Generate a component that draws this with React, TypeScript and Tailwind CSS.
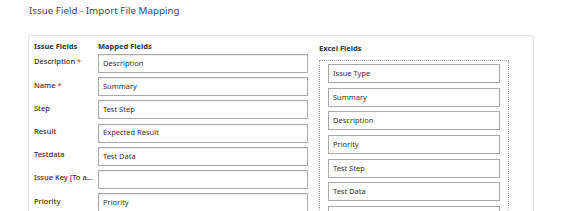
import React from "react";

const rows: { label: string; req?: boolean; value: string }[] = [
  { label: "Description", req: true, value: "Description" },
  { label: "Name", req: true, value: "Summary" },
  { label: "Step", value: "Test Step" },
  { label: "Result", value: "Expected Result" },
  { label: "Testdata", value: "Test Data" },
  { label: "Issue Key [To a...", value: "" },
  { label: "Priority", value: "Priority" },
];

const excel = ["Issue Type", "Summary", "Description", "Priority", "Test Step", "Test Data", ""];

export default function App() {
  return (
    <div className="w-[576px] h-[211px] overflow-hidden bg-white text-[#333] [font-family:'Noto_Sans','Open_Sans',sans-serif]">
      <div className="pl-[29px] pt-[4px] h-[35px]">
        <div className="text-[9.8px] leading-[14px] text-[#3f4756]">Issue Field - Import File Mapping</div>
      </div>
      <div className="ml-[28px] w-[506px] h-[200px] border border-[#e2e2e2] rounded-[2px] flex">
        <div className="pl-[5px] pt-[5px] w-[280px] flex flex-col">
          <div className="flex h-[11px] items-center text-[7.5px] font-bold text-[#2b3441]">
            <div className="w-[64px]">Issue Fields</div>
            <div>Mapped Fields</div>
          </div>
          <div className="mt-[2px] flex flex-col gap-[4.2px]">
            {rows.map((r) => (
              <div key={r.label} className="flex items-center h-[19px]">
                <div className="w-[64px] pb-[3px] text-[7.5px] font-medium whitespace-nowrap text-[#2f2f2f]">
                  {r.label}
                  {r.req && <span className="text-[#d0342c]"> *</span>}
                </div>
                <div className="w-[210px] h-[19px] border border-[#a9a9a9] shadow-[inset_0_1px_1px_rgba(0,0,0,0.08)] flex items-center pl-[4px] text-[7.5px] text-[#333]">
                  {r.value}
                </div>
              </div>
            ))}
          </div>
        </div>
        <div className="ml-[10px] pt-[7px] flex flex-col">
          <div className="h-[11px] flex items-center text-[7.5px] font-bold text-[#2b3441]">Excel Fields</div>
          <div className="mt-[6px] w-[190px] h-[200px] border border-dotted border-[#a8a8a8] px-[8px] pt-[3px] flex flex-col gap-[4.7px]">
            {excel.map((e, i) => (
              <div key={i} className="h-[19px] border border-[#a9a9a9] flex items-center pl-[4px] text-[7.5px] text-[#333] shrink-0">
                {e}
              </div>
            ))}
          </div>
        </div>
      </div>
    </div>
  );
}
